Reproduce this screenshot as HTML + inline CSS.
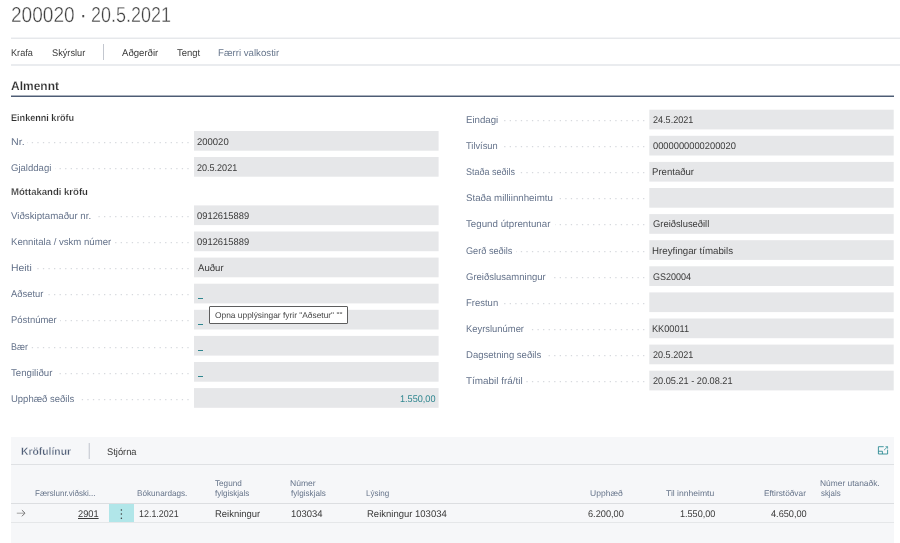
<!DOCTYPE html>
<html lang="is">
<head>
<meta charset="utf-8">
<title>200020 · 20.5.2021</title>
<style>
html,body{margin:0;padding:0;background:#fff;}
body{width:900px;height:543px;position:relative;overflow:hidden;will-change:transform;font-family:"Liberation Sans",sans-serif;}
.t{position:absolute;white-space:nowrap;line-height:1;transform-origin:0 0;text-rendering:geometricPrecision;font-size:9.7px;color:#3a3a3a;}
.ttl{font-size:21.6px;color:#404040;transform-origin:0 0;-webkit-text-stroke:0.4px #fff;}
.tb{color:#3a3a3a;}
.dim{color:#67768c;}
.h1{font-size:12.2px;font-weight:bold;color:#2e2e2e;-webkit-text-stroke:0.18px #fff;}
.gc{font-size:9.7px;font-weight:bold;color:#2e2e2e;-webkit-text-stroke:0.18px #fff;}
.lb{color:#64728a;}
.cv{position:absolute;background:#fff;}
.v{color:#3a3a3a;}
.tl{color:#2f868f;}
.ul{text-decoration:underline;text-decoration-thickness:0.7px;text-underline-offset:1.2px;}
.f{position:absolute;background:#e6e7e9;}
.us{position:absolute;width:5px;height:1px;background:#2f868f;}
.ld{position:absolute;overflow:visible;}
.ld line{stroke:#cdd0d6;stroke-width:1;stroke-dasharray:1.3 4.256;}
.hl{position:absolute;height:1px;background:#e2e2e2;}
.sh{font-size:10.9px;font-weight:bold;color:#505e77;-webkit-text-stroke:0.28px #f6f7f9;}
.ch{font-size:8.3px;color:#66748a;}
.tt{font-size:8.3px;color:#454545;}
.vs{position:absolute;width:1px;background:#c9ccd1;}
</style>
</head>
<body>
<!-- page title + action bar -->
<h1 style="margin:0;font-weight:normal"><span class="t ttl" style="left:10.97px;top:4px;transform:scaleX(0.8846);">200020 </span><span class="t ttl" style="left:79.59px;top:4px;transform:scaleX(0.9048);-webkit-text-stroke:0;color:#4a4a4a">· </span><span class="t ttl" style="left:90.73px;top:4px;transform:scaleX(0.8325);">20.5.2021</span></h1>
<div class="hl" style="left:11px;top:37px;width:889px;background:#f3f4f6"></div>
<div class="hl" style="left:11px;top:38px;width:889px;background:#e6e8eb"></div>
<div class="hl" style="left:11px;top:64px;width:889px;height:2px;background:#eaecef"></div>
<div class="vs" style="left:103px;top:44px;height:16px;background:#c3c7cf"></div>
<div class="t tb" style="left:11.29px;top:49px;transform:scaleX(0.9443);">Krafa</div>
<div class="t tb" style="left:52.22px;top:49px;transform:scaleX(0.9507);">Skýrslur</div>
<div class="t tb" style="left:122.20px;top:49px;transform:scaleX(0.9904);">Aðgerðir</div>
<div class="t tb" style="left:176.80px;top:49px;transform:scaleX(0.9787);">Tengt</div>
<div class="t tb dim" style="left:217.85px;top:49px;transform:scaleX(0.9975);">Færri valkostir</div>
<div class="t h1" style="left:11.10px;top:80px;transform:scaleX(0.9835);">Almennt</div>
<div class="t gc" style="left:10.84px;top:114px;transform:scaleX(0.9373);">Einkenni kröfu</div>
<div class="t gc" style="left:10.81px;top:188px;transform:scaleX(0.9857);">Móttakandi kröfu</div>
<div class="hl" style="left:11px;top:95px;width:882.7px;background:#a9b0bc"></div>
<div class="hl" style="left:11px;top:96px;width:882.7px;background:#4d5c74"></div>

<!-- Almennt fields -->
<svg style="position:absolute;left:0;top:0" width="900" height="420" viewBox="0 0 900 420" fill="#e6e7e9"><rect x="194.00" y="131.00" width="244.60" height="19.7"/><rect x="194.00" y="157.00" width="244.60" height="19.7"/><rect x="194.00" y="205.40" width="244.60" height="19.7"/><rect x="194.00" y="231.50" width="244.60" height="19.7"/><rect x="194.00" y="257.60" width="244.60" height="19.7"/><rect x="194.00" y="283.70" width="244.60" height="19.7"/><rect x="194.00" y="309.80" width="244.60" height="19.7"/><rect x="194.00" y="335.90" width="244.60" height="19.7"/><rect x="194.00" y="362.00" width="244.60" height="19.7"/><rect x="194.00" y="388.10" width="244.60" height="19.7"/><rect x="649.30" y="109.70" width="244.40" height="19.7"/><rect x="649.30" y="135.80" width="244.40" height="19.7"/><rect x="649.30" y="161.90" width="244.40" height="19.7"/><rect x="649.30" y="188.00" width="244.40" height="19.7"/><rect x="649.30" y="214.10" width="244.40" height="19.7"/><rect x="649.30" y="240.20" width="244.40" height="19.7"/><rect x="649.30" y="266.30" width="244.40" height="19.7"/><rect x="649.30" y="292.40" width="244.40" height="19.7"/><rect x="649.30" y="318.50" width="244.40" height="19.7"/><rect x="649.30" y="344.60" width="244.40" height="19.7"/><rect x="649.30" y="370.70" width="244.40" height="19.7"/></svg>
<svg class="ld" style="left:11px;top:141px" width="183" height="3" viewBox="0 0 183 3"><line x1="177.65" y1="1.70" x2="0" y2="1.70"/></svg>
<div class="cv" style="left:10.40px;top:133.00px;width:16.90px;height:15px"></div>
<div class="t lb" style="left:10.57px;top:138px;transform:scaleX(1.1019);">Nr.</div>
<div class="t v" style="left:197.36px;top:138px;transform:scaleX(0.9794);">200020</div>
<svg class="ld" style="left:11px;top:167px" width="183" height="3" viewBox="0 0 183 3"><line x1="177.65" y1="1.70" x2="0" y2="1.70"/></svg>
<div class="cv" style="left:10.40px;top:159.00px;width:44.40px;height:15px"></div>
<div class="t lb" style="left:10.96px;top:164px;transform:scaleX(0.9862);">Gjalddagi</div>
<div class="t v" style="left:197.38px;top:164px;transform:scaleX(0.9325);">20.5.2021</div>
<svg class="ld" style="left:11px;top:215px" width="183" height="3" viewBox="0 0 183 3"><line x1="177.65" y1="1.70" x2="0" y2="1.70"/></svg>
<div class="cv" style="left:10.40px;top:207.40px;width:84.40px;height:15px"></div>
<div class="t lb" style="left:11.40px;top:212px;transform:scaleX(1.0013);">Viðskiptamaður nr.</div>
<div class="t v" style="left:197.46px;top:212px;transform:scaleX(0.9671);">0912615889</div>
<svg class="ld" style="left:11px;top:241px" width="183" height="3" viewBox="0 0 183 3"><line x1="177.65" y1="1.70" x2="0" y2="1.70"/></svg>
<div class="cv" style="left:10.40px;top:233.50px;width:104.40px;height:15px"></div>
<div class="t lb" style="left:10.66px;top:238px;transform:scaleX(0.9895);">Kennitala / vskm númer</div>
<div class="t v" style="left:197.46px;top:238px;transform:scaleX(0.9671);">0912615889</div>
<svg class="ld" style="left:11px;top:267px" width="183" height="3" viewBox="0 0 183 3"><line x1="177.65" y1="1.70" x2="0" y2="1.70"/></svg>
<div class="cv" style="left:10.40px;top:259.60px;width:24.40px;height:15px"></div>
<div class="t lb" style="left:10.59px;top:264px;transform:scaleX(1.0748);">Heiti</div>
<div class="t v" style="left:197.80px;top:264px;transform:scaleX(0.9903);">Auður</div>
<svg class="ld" style="left:11px;top:293px" width="183" height="3" viewBox="0 0 183 3"><line x1="177.65" y1="1.70" x2="0" y2="1.70"/></svg>
<div class="cv" style="left:10.40px;top:285.70px;width:37.30px;height:15px"></div>
<div class="t lb" style="left:11.40px;top:290px;transform:scaleX(0.9700);">Aðsetur</div>
<div class="us" style="left:197.80px;top:298px"></div>
<svg class="ld" style="left:11px;top:319px" width="183" height="3" viewBox="0 0 183 3"><line x1="177.65" y1="1.70" x2="0" y2="1.70"/></svg>
<div class="cv" style="left:10.40px;top:311.80px;width:49.90px;height:15px"></div>
<div class="t lb" style="left:10.67px;top:316px;transform:scaleX(0.9761);">Póstnúmer</div>
<div class="us" style="left:197.80px;top:324px"></div>
<svg class="ld" style="left:11px;top:346px" width="183" height="3" viewBox="0 0 183 3"><line x1="177.65" y1="1.70" x2="0" y2="1.70"/></svg>
<div class="cv" style="left:10.40px;top:337.90px;width:21.10px;height:15px"></div>
<div class="t lb" style="left:10.71px;top:343px;transform:scaleX(0.9226);">Bær</div>
<div class="us" style="left:197.80px;top:350px"></div>
<svg class="ld" style="left:11px;top:372px" width="183" height="3" viewBox="0 0 183 3"><line x1="177.65" y1="1.70" x2="0" y2="1.70"/></svg>
<div class="cv" style="left:10.40px;top:364.00px;width:46.10px;height:15px"></div>
<div class="t lb" style="left:11.20px;top:369px;transform:scaleX(0.9976);">Tengiliður</div>
<div class="us" style="left:197.80px;top:376px"></div>
<svg class="ld" style="left:11px;top:398px" width="183" height="3" viewBox="0 0 183 3"><line x1="177.65" y1="1.70" x2="0" y2="1.70"/></svg>
<div class="cv" style="left:10.40px;top:390.10px;width:67.30px;height:15px"></div>
<div class="t lb" style="left:10.71px;top:395px;transform:scaleX(0.9788);">Upphæð seðils</div>
<div class="t v tl" style="left:400.14px;top:395px;transform:scaleX(0.9401);">1.550,00</div>
<svg class="ld" style="left:466px;top:119px" width="183" height="3" viewBox="0 0 183 3"><line x1="178.35" y1="1.70" x2="0" y2="1.70"/></svg>
<div class="cv" style="left:465.60px;top:111.70px;width:35.90px;height:15px"></div>
<div class="t lb" style="left:465.85px;top:116px;transform:scaleX(0.9968);">Eindagi</div>
<div class="t v" style="left:652.58px;top:116px;transform:scaleX(0.9349);">24.5.2021</div>
<svg class="ld" style="left:466px;top:145px" width="183" height="3" viewBox="0 0 183 3"><line x1="178.35" y1="1.70" x2="0" y2="1.70"/></svg>
<div class="cv" style="left:465.60px;top:137.80px;width:35.90px;height:15px"></div>
<div class="t lb" style="left:466.41px;top:142px;transform:scaleX(0.9581);">Tilvísun</div>
<div class="t v" style="left:652.66px;top:142px;transform:scaleX(0.9614);">0000000000200020</div>
<svg class="ld" style="left:466px;top:171px" width="183" height="3" viewBox="0 0 183 3"><line x1="178.35" y1="1.70" x2="0" y2="1.70"/></svg>
<div class="cv" style="left:465.60px;top:163.90px;width:53.40px;height:15px"></div>
<div class="t lb" style="left:466.23px;top:168px;transform:scaleX(0.9290);">Staða seðils</div>
<div class="t v" style="left:652.26px;top:168px;transform:scaleX(0.9880);">Prentaður</div>
<svg class="ld" style="left:466px;top:197px" width="183" height="3" viewBox="0 0 183 3"><line x1="178.35" y1="1.70" x2="0" y2="1.70"/></svg>
<div class="cv" style="left:465.60px;top:190.00px;width:90.90px;height:15px"></div>
<div class="t lb" style="left:466.20px;top:194px;transform:scaleX(1.0017);">Staða milliinnheimtu</div>
<svg class="ld" style="left:466px;top:223px" width="183" height="3" viewBox="0 0 183 3"><line x1="178.35" y1="1.70" x2="0" y2="1.70"/></svg>
<div class="cv" style="left:465.60px;top:216.10px;width:89.20px;height:15px"></div>
<div class="t lb" style="left:466.40px;top:220px;transform:scaleX(1.0048);">Tegund útprentunar</div>
<div class="t v" style="left:652.56px;top:220px;transform:scaleX(0.9676);">Greiðsluseðill</div>
<svg class="ld" style="left:466px;top:250px" width="183" height="3" viewBox="0 0 183 3"><line x1="178.35" y1="1.70" x2="0" y2="1.70"/></svg>
<div class="cv" style="left:465.60px;top:242.20px;width:50.60px;height:15px"></div>
<div class="t lb" style="left:466.17px;top:247px;transform:scaleX(0.9451);">Gerð seðils</div>
<div class="t v" style="left:652.25px;top:247px;transform:scaleX(1.0031);">Hreyfingar tímabils</div>
<svg class="ld" style="left:466px;top:276px" width="183" height="3" viewBox="0 0 183 3"><line x1="178.35" y1="1.70" x2="0" y2="1.70"/></svg>
<div class="cv" style="left:465.60px;top:268.30px;width:84.20px;height:15px"></div>
<div class="t lb" style="left:466.16px;top:273px;transform:scaleX(0.9796);">Greiðslusamningur</div>
<div class="t v" style="left:652.58px;top:273px;transform:scaleX(0.9256);">GS20004</div>
<svg class="ld" style="left:466px;top:302px" width="183" height="3" viewBox="0 0 183 3"><line x1="178.35" y1="1.70" x2="0" y2="1.70"/></svg>
<div class="cv" style="left:465.60px;top:294.40px;width:35.90px;height:15px"></div>
<div class="t lb" style="left:465.87px;top:299px;transform:scaleX(0.9794);">Frestun</div>
<svg class="ld" style="left:466px;top:328px" width="183" height="3" viewBox="0 0 183 3"><line x1="178.35" y1="1.70" x2="0" y2="1.70"/></svg>
<div class="cv" style="left:465.60px;top:320.50px;width:62.20px;height:15px"></div>
<div class="t lb" style="left:465.87px;top:325px;transform:scaleX(0.9703);">Keyrslunúmer</div>
<div class="t v" style="left:652.29px;top:325px;transform:scaleX(0.9474);">KK00011</div>
<svg class="ld" style="left:466px;top:354px" width="183" height="3" viewBox="0 0 183 3"><line x1="178.35" y1="1.70" x2="0" y2="1.70"/></svg>
<div class="cv" style="left:465.60px;top:346.60px;width:79.20px;height:15px"></div>
<div class="t lb" style="left:465.86px;top:351px;transform:scaleX(0.9834);">Dagsetning seðils</div>
<div class="t v" style="left:652.58px;top:351px;transform:scaleX(0.9349);">20.5.2021</div>
<svg class="ld" style="left:466px;top:380px" width="183" height="3" viewBox="0 0 183 3"><line x1="178.35" y1="1.70" x2="0" y2="1.70"/></svg>
<div class="cv" style="left:465.60px;top:372.70px;width:60.90px;height:15px"></div>
<div class="t lb" style="left:466.40px;top:377px;transform:scaleX(1.0219);">Tímabil frá/til</div>
<div class="t v" style="left:652.57px;top:377px;transform:scaleX(0.9465);">20.05.21 - 20.08.21</div>

<!-- tooltip -->
<div style="position:absolute;left:209.1px;top:306px;width:136.8px;height:15.7px;border:1px solid #5e5e5e;background:#fff;border-radius:1px;box-sizing:content-box"></div>
<div class="t tt" style="left:214.75px;top:311px;transform:scaleX(1.0096);">Opna upplýsingar fyrir "Aðsetur" ""</div>

<!-- Kröfulínur subpage -->
<div style="position:absolute;left:11px;top:437px;width:882.7px;height:106px;background:#f6f7f9"></div>
<div class="hl" style="left:11px;top:464px;width:882.7px;background:#dfe1e4"></div>
<div class="hl" style="left:11px;top:503px;width:882.7px;background:#dcdee1"></div>
<div class="hl" style="left:11px;top:522px;width:882.7px;background:#e5e7e9"></div>
<div class="vs" style="left:88px;top:443px;height:16px;background:#e7e9ed"></div>
<div class="vs" style="left:89px;top:443px;height:16px;background:#cfd2d9"></div>
<div style="position:absolute;left:109px;top:503.5px;width:25.2px;height:18.6px;background:#b1e6e9"></div>
<svg style="position:absolute;left:119px;top:508px" width="5" height="12" viewBox="0 0 5 12"><circle cx="2.4" cy="1.9" r="0.75" fill="#3a3a3a"/><circle cx="2.4" cy="6.1" r="0.75" fill="#3a3a3a"/><circle cx="2.4" cy="10.3" r="0.75" fill="#3a3a3a"/></svg>
<svg style="position:absolute;left:16px;top:508px" width="11" height="10" viewBox="0 0 11 10"><path d="M0.8 5.2H8.6" fill="none" stroke="#999" stroke-width="0.9"/><path d="M5.9 2.1L9 5.2L5.9 8.3" fill="none" stroke="#5a5a5a" stroke-width="0.85"/></svg>
<svg style="position:absolute;left:877px;top:445px" width="12" height="11" viewBox="0 0 12 11"><path d="M6.7 1.7H1.4V9H10.6V4.7M1.4 6.25H5.4V9" fill="none" stroke="#23868f" stroke-width="0.85"/><path d="M8.5 1.7H10.6V3.7M10.5 1.8L7 5.2" fill="none" stroke="#23868f" stroke-width="0.7"/></svg>
<div class="t sh" style="left:21.13px;top:447px;transform:scaleX(0.9508);">Kröfulínur</div>
<div class="t tb" style="left:107.12px;top:448px;transform:scaleX(0.9621);">Stjórna</div>
<div class="t ch" style="left:35.17px;top:489px;transform:scaleX(0.9657);">Færslunr.viðski...</div>
<div class="t ch" style="left:137.36px;top:489px;transform:scaleX(0.9839);">Bókunardags.</div>
<div class="t ch" style="left:214.55px;top:479px;transform:scaleX(0.9831);">Tegund</div>
<div class="t ch" style="left:214.60px;top:489px;transform:scaleX(0.9687);">fylgiskjals</div>
<div class="t ch" style="left:290.03px;top:479px;transform:scaleX(1.0311);">Númer</div>
<div class="t ch" style="left:290.60px;top:489px;transform:scaleX(0.9801);">fylgiskjals</div>
<div class="t ch" style="left:366.47px;top:489px;transform:scaleX(0.9716);">Lýsing</div>
<div class="t ch" style="left:589.78px;top:489px;transform:scaleX(1.0275);">Upphæð</div>
<div class="t ch" style="left:666.05px;top:489px;transform:scaleX(1.0325);">Til innheimtu</div>
<div class="t ch" style="left:763.95px;top:489px;transform:scaleX(1.0000);">Eftirstöðvar</div>
<div class="t ch" style="left:820.04px;top:479px;transform:scaleX(1.0113);">Númer utanaðk.</div>
<div class="t ch" style="left:820.51px;top:489px;transform:scaleX(0.9481);">skjals</div>
<div class="t v ul" style="left:77.57px;top:510px;transform:scaleX(0.9565);">2901</div>
<div class="t v" style="left:138.56px;top:510px;transform:scaleX(0.9190);">12.1.2021</div>
<div class="t v" style="left:214.57px;top:510px;transform:scaleX(0.9758);">Reikningur</div>
<div class="t v" style="left:291.12px;top:510px;transform:scaleX(0.9745);">103034</div>
<div class="t v" style="left:367.06px;top:510px;transform:scaleX(0.9807);">Reikningur 103034</div>
<div class="t v" style="left:587.77px;top:510px;transform:scaleX(0.9499);">6.200,00</div>
<div class="t v" style="left:680.04px;top:510px;transform:scaleX(0.9373);">1.550,00</div>
<div class="t v" style="left:771.21px;top:510px;transform:scaleX(0.9462);">4.650,00</div>
</body>
</html>
